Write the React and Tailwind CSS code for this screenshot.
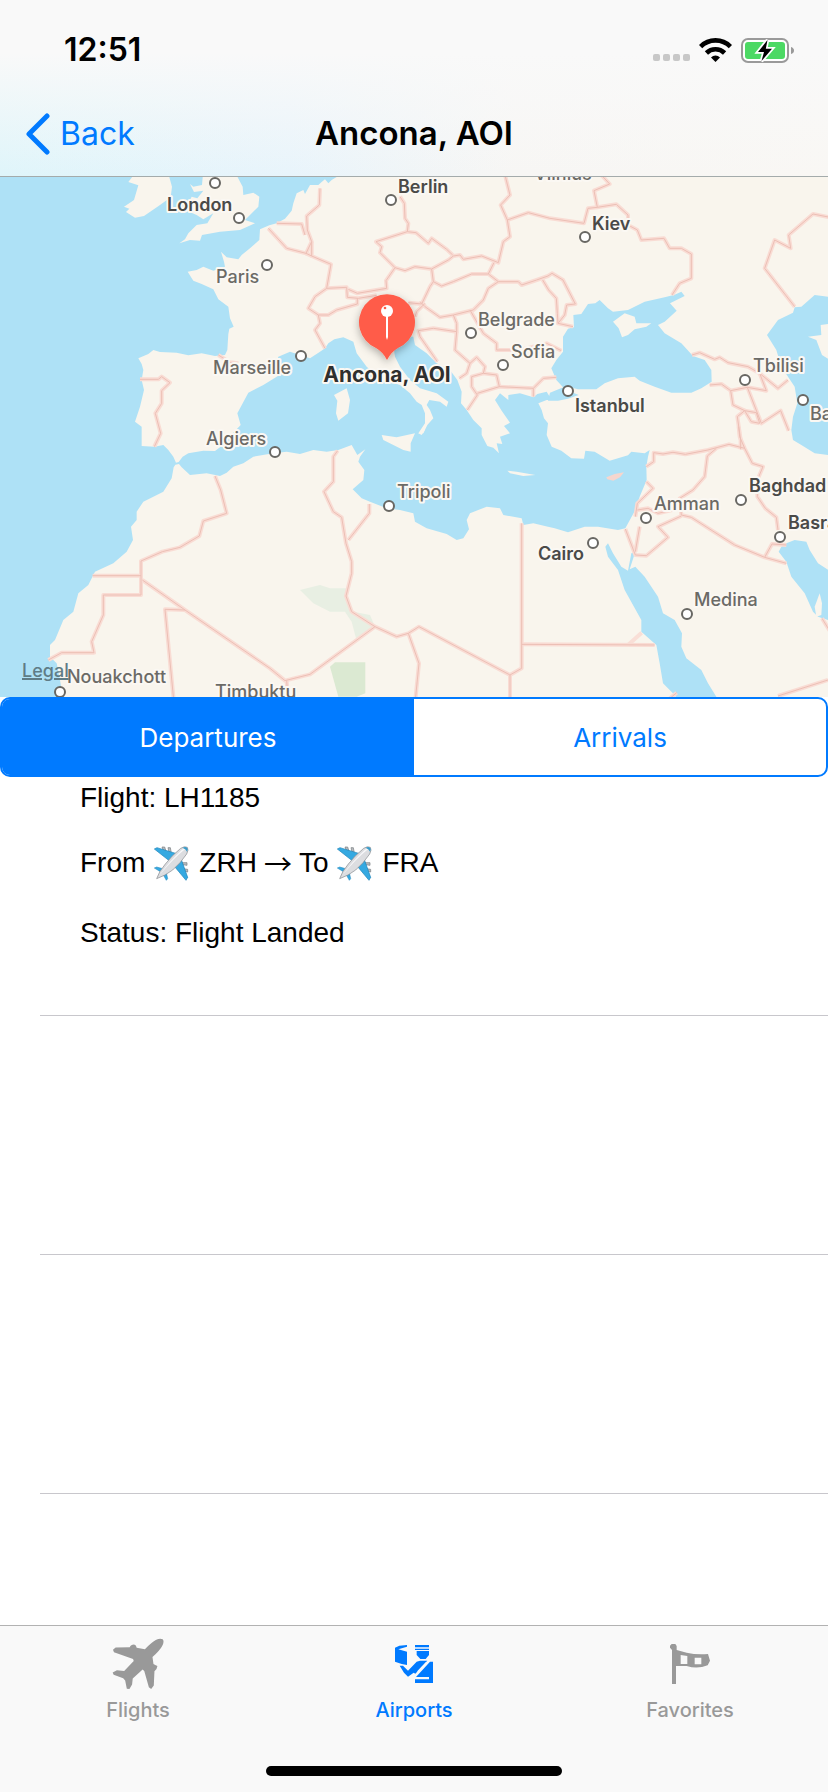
import React, { useState } from "react";

const MAINLAND =
  "1010,0 1010,21 995,30 985,40 975,28 965,36 955,45 930,45 915,72 910,60 890,70 880,100 875,122 855,146 830,160 808,166 780,178 778,210 750,235 725,255 715,268 680,262 663,245 672,275 675,290 640,302 610,290 590,300 563,305 580,332 605,342 640,358 655,388 685,410 690,445 701,470 688,476 685,492 682,540 675,555 645,558 605,550 565,556 530,548 480,546 460,540 445,552 415,565 425,582 430,600 425,630 432,660 420,710 405,755 425,770 425,828 463,830 490,825 505,840 520,860 528,878 536,876 548,860 565,850 610,842 645,843 660,832 680,805 700,788 722,765 712,730 745,668 790,645 835,617 850,600 828,580 835,560 870,545 900,555 930,565 960,545 975,535 985,520 1003,508 1030,502 1060,515 1070,550 1100,590 1140,625 1200,645 1230,670 1250,695 1265,705 1275,730 1275,760 1255,790 1270,790 1282,765 1300,745 1290,720 1280,705 1288,690 1320,695 1340,710 1345,695 1310,670 1260,655 1230,630 1200,590 1185,560 1182,540 1195,520 1225,498 1240,500 1245,525 1280,550 1310,580 1350,600 1372,630 1385,665 1383,700 1400,720 1420,750 1445,775 1445,795 1462,828 1480,833 1497,850 1490,820 1507,822 1500,800 1530,790 1512,768 1530,758 1505,722 1485,690 1500,670 1525,690 1525,675 1560,670 1600,682 1612,672 1640,665 1655,690 1640,690 1615,700 1625,720 1632,745 1644,760 1640,795 1655,830 1684,842 1714,865 1752,866 1756,842 1784,845 1829,872 1884,856 1894,845 1934,850 1949,840 1944,860 1939,890 1940,930 1919,980 1906,1020 1876,1075 1854,1080 1794,1070 1754,1070 1704,1087 1664,1075 1644,1070 1600,1060 1570,1065 1565,1045 1510,1035 1500,1015 1460,1010 1410,1030 1400,1050 1407,1078 1390,1105 1370,1110 1340,1092 1280,1075 1245,1055 1240,1030 1200,1020 1160,1015 1110,995 1085,985 1058,958 1090,930 1093,900 1075,875 1080,860 1096,838 1072,855 1055,825 1015,840 980,845 940,840 900,852 860,845 820,850 760,860 730,880 700,890 680,908 660,918 620,910 570,915 545,892 537,882 526,884 521,892 515,925 490,965 430,995 410,1025 410,1050 393,1070 399,1110 380,1145 340,1180 285,1205 265,1245 235,1270 220,1325 190,1350 165,1410 150,1425 150,1460 170,1480 180,1530 195,1620 2500,1620 2500,0";

const ISLANDS = [
  "610,0 606,45 580,50 570,42 582,66 610,62 592,85 575,80 555,120 590,135 610,148 640,130 622,160 590,165 565,190 555,208 538,220 570,210 600,212 606,195 660,185 720,180 765,160 735,150 775,110 778,80 760,68 730,75 728,50 712,20 700,0",
  "390,0 396,22 385,36 415,46 402,90 372,110 388,116 378,126 405,143 432,138 480,105 512,82 516,50 508,22 510,0",
  "1002,675 1040,655 1050,690 1044,730 1015,752 1008,730 1012,692",
  "1145,795 1190,802 1245,790 1232,820 1232,845 1210,840 1150,810",
  "1522,902 1550,905 1606,915 1570,918 1530,910",
  "1255,790 1275,780 1265,795",
];

const SEAS = [
  "1720,435 1744,432 1764,402 1786,400 1799,390 1824,415 1839,425 1884,420 1934,395 1994,382 2024,374 2044,365 2054,378 2010,400 2030,422 1994,455 1974,465 1994,490 2044,520 2079,558 2114,570 2134,600 2135,635 2104,655 2074,668 2014,668 1964,650 1919,632 1904,620 1854,625 1814,640 1789,658 1734,658 1710,652 1692,655 1669,630 1654,595 1669,570 1689,545 1689,500 1704,476 1722,472",
  "1650,668 1690,652 1720,668 1736,675 1704,686 1674,692 1644,692",
  "2384,412 2404,410 2444,375 2500,382 2500,857 2484,855 2444,850 2404,825 2379,810 2374,780 2379,740 2392,700 2384,650 2344,590 2329,540 2301,495 2334,450 2379,428",
  "1824,1120 1816,1130 1824,1160 1854,1200 1874,1260 1924,1350 1924,1385 1969,1425 1979,1480 1989,1540 2024,1575 2040,1600 2160,1600 2149,1580 2124,1540 2104,1500 2059,1465 2044,1430 2046,1390 2024,1350 1989,1330 1974,1280 1934,1220 1906,1190 1889,1198 1906,1145 1894,1150 1884,1202 1864,1190 1839,1150",
  "2344,1130 2359,1120 2384,1110 2419,1115 2429,1140 2454,1180 2500,1210 2500,1355 2454,1340 2439,1325 2414,1270 2374,1220 2359,1175 2336,1145",
];

const INNER_LAND = [
  "1839,455 1874,430 1904,440 1909,460 1954,460 1939,470 1904,478 1884,495 1866,502 1856,475",
  "2500,460 2462,465 2464,495 2424,500 2449,510 2466,555 2500,576",
  "2459,1270 2466,1300 2464,1335 2449,1340 2444,1310",
];

const PARKS = [
  ["900,1260 960,1245 990,1255 1040,1255 1036,1280 1060,1325 1110,1335 1125,1370 1068,1405 1055,1355 1035,1325 990,1325 940,1300", "#e8efe3"],
  ["990,1490 1005,1477 1096,1477 1096,1570 1070,1580 1015,1580", "#dbe9d2"],
];

const BORDERS = [
  "1200,80 1213,100 1215,145 1225,160 1222,185 1248,188 1285,220 1295,205 1340,238 1358,255",
  "1222,185 1128,215 1145,230 1140,248 1185,293 1215,302 1245,290 1295,297 1345,270 1360,258 1380,255 1390,268 1445,258 1495,278 1510,215 1530,200 1522,150 1502,105 1530,75 1515,15",
  "1522,150 1585,128 1650,145 1752,160 1764,115 1792,112 1782,62 1829,42 1804,15",
  "1792,112 1849,103 1884,135 1884,165 1912,180 1924,210 1992,205 2009,235 2044,235 2074,252 2074,325 2039,340 2016,375",
  "1185,293 1158,332 1160,355 1072,370 1045,358",
  "960,55 958,105 920,138 922,180 935,215 918,250 860,235 805,175",
  "830,160 905,162 915,195",
  "935,215 935,258 993,283 980,355 1040,352 1042,382 1075,385 1130,376",
  "918,250 935,258",
  "980,355 945,380 925,415 955,435 985,435 1010,420 1072,402 1072,385",
  "955,435 960,460 945,480 975,535",
  "1225,398 1265,402 1290,350 1300,335 1295,297",
  "1300,335 1325,348 1360,335 1415,312 1465,312 1495,335 1555,335 1565,345 1610,330 1644,318 1656,310 1689,330 1726,402 1700,405 1694,435 1674,460 1719,470",
  "1465,312 1482,278",
  "1495,335 1465,355 1450,390 1420,420 1360,435 1320,442 1275,410 1260,395",
  "1275,400 1250,425 1245,440",
  "1360,435 1370,460 1370,485 1300,475 1255,482 1260,500 1312,575",
  "1370,485 1365,540 1410,580 1400,610 1378,625",
  "1410,420 1450,490 1490,520 1490,540 1560,540 1640,520 1684,542",
  "1410,580 1430,562 1455,590 1450,610 1415,620 1415,650 1432,675 1402,720",
  "1450,610 1490,615 1498,650 1432,670",
  "1498,650 1600,655 1630,625 1669,622",
  "1600,655 1600,680",
  "1628,330 1646,360 1669,385 1672,430 1674,460",
  "2076,555 2099,548 2144,568 2159,562 2184,578 2244,590 2279,610 2334,655 2364,630",
  "2129,645 2164,642 2192,662 2199,705 2234,722 2269,728 2279,760",
  "2192,662 2242,652 2299,662 2279,610",
  "2242,652 2284,760 2342,722 2366,782",
  "2279,760 2254,755 2234,722 2212,740 2222,810 2222,838",
  "2216,770 2219,800 2234,835 2257,880 2289,890 2272,930 2272,980 2296,1015 2329,1042 2334,1080",
  "2500,144 2439,132 2366,195 2372,235 2324,210 2294,295 2384,410",
  "1939,890 1961,875 1961,848 1989,852 2019,847 2056,853 2124,840 2187,823 2234,835",
  "2149,835 2122,858 2114,920 2079,960 2039,985 2044,1035 2074,1042 2204,1125 2294,1162 2359,1180",
  "2294,1162 2316,1122 2359,1125",
  "2044,1038 1974,1070 2004,1102 1939,1157 1906,1155 1876,1077",
  "1906,1145 1919,1070",
  "1939,935 1959,955 1912,1000 1906,1040",
  "1912,1020 1944,1015 1974,1030 2039,1015",
  "1565,1060 1565,1495 1530,1515 1530,1600",
  "1565,1423 1964,1425",
  "1530,1515 1257,1370 1225,1390 1190,1400 1125,1370 1055,1325 1038,1278 1055,1210 1055,1175 1038,1120 1025,1042 1000,1025 972,965 1000,935 1000,860 1013,842",
  "1045,1110 1108,1030 1108,1002",
  "1225,1390 1257,1480 1245,1600",
  "1125,1370 930,1513 855,1532 810,1495 555,1320 427,1230",
  "860,1532 865,1600",
  "555,1320 495,1318 522,1600",
  "645,918 662,960 680,1030 610,1053 598,1098 540,1132 487,1145 423,1173 423,1275 310,1275 310,1335 275,1415 282,1448 185,1448 145,1470",
  "423,1217 278,1217",
  "420,628 475,628 485,620 510,638 485,662 485,700 466,730 482,790 463,830",
  "655,555 690,577 715,580",
  "2334,1578 2484,1530",
  "2010,1585 2030,1568",
  "2466,1345 2500,1400",
];

const DOTS = [
  [215, 6], [239, 41], [267, 88], [391, 23], [301, 179], [471, 156], [503, 188], [585, 60],
  [568, 214], [745, 203], [803, 223], [275, 275], [389, 329], [593, 366], [646, 341],
  [741, 323], [780, 360], [687, 437], [60, 515],
];

const STRONG = { weight: 600, fill: "#4a4a48" };
const LIGHT = { weight: 500, fill: "#6b6a66" };

const CITIES = [
  ["London", 167, 34, STRONG],
  ["Paris", 216, 106, LIGHT],
  ["Marseille", 213, 197, LIGHT],
  ["Berlin", 398, 16, STRONG],
  ["Vilnius", 534, 3, LIGHT],
  ["Kiev", 592, 53, STRONG],
  ["Belgrade", 478, 149, LIGHT],
  ["Sofia", 511, 181, LIGHT],
  ["Istanbul", 575, 235, STRONG],
  ["Tbilisi", 753, 195, LIGHT],
  ["Baku", 810, 243, LIGHT],
  ["Algiers", 206, 268, LIGHT],
  ["Tripoli", 397, 321, LIGHT],
  ["Cairo", 538, 383, STRONG],
  ["Amman", 654, 333, LIGHT],
  ["Baghdad", 749, 315, STRONG],
  ["Basra", 788, 352, STRONG],
  ["Medina", 694, 429, LIGHT],
  ["Nouakchott", 67, 506, LIGHT],
  ["Timbuktu", 215, 521, LIGHT],
];

function AirportMap() {
  return (
    <section aria-label="Map" className="relative">
      <svg viewBox="0 0 828 520" className="block w-full bg-[#aee1f6] font-[Inter,sans-serif]">
        <defs>
          <filter id="pin-shadow" x="-30%" y="-30%" width="160%" height="160%">
            <feDropShadow dx="0" dy="3" stdDeviation="4" floodOpacity="0.3" />
          </filter>
        </defs>
        <g transform="translate(0 -7) scale(0.333333)">
          <polygon points={MAINLAND} fill="#f9f5ed" />
          {ISLANDS.map((p) => <polygon key={p} points={p} fill="#f9f5ed" />)}
          {PARKS.map(([p, fill]) => <polygon key={p} points={p} fill={fill} />)}
          {SEAS.map((p) => <polygon key={p} points={p} fill="#aee1f6" />)}
          {INNER_LAND.map((p) => <polygon key={p} points={p} fill="#f9f5ed" />)}
          <polygon points="1819,922 1844,912 1872,907 1860,922 1840,932 1822,928" fill="#f6d6ce" />
          <polyline points="1884,1425 1925,1388" fill="none" stroke="#f9dfd7" strokeWidth="12" />
          <g fill="none" stroke="#f9dcd4" strokeWidth="12" strokeLinejoin="round">
            {BORDERS.map((p) => <polyline key={p} points={p} />)}
          </g>
          <g fill="none" stroke="#ecbfb5" strokeWidth="3" strokeLinejoin="round">
            {BORDERS.map((p) => <polyline key={p} points={p} />)}
          </g>
        </g>
        {DOTS.map(([x, y]) => (
          <circle key={`${x}-${y}`} cx={x} cy={y} r="5" fill="#fff" stroke="#686763" strokeWidth="2" />
        ))}
        <g fontSize="18" stroke="#fbf8f3" strokeWidth="4" strokeLinejoin="round" paintOrder="stroke">
          {CITIES.map(([name, x, y, tone]) => (
            <text key={name} x={x} y={y} fontWeight={tone.weight} fill={tone.fill}>{name}</text>
          ))}
        </g>
        <path
          d="M387 183 Q383 175 376 171 A28 28 0 1 1 398 171 Q391 175 387 183 Z"
          fill="#ff5b48"
          filter="url(#pin-shadow)"
        />
        <path d="M386 139 H388 V160 L387 163 L386 160 Z" fill="#fff" />
        <circle cx="387" cy="134" r="6" fill="#fff" />
        <circle cx="385" cy="131" r="1.3" fill="#ff5b48" />
        <text x="387" y="205" textAnchor="middle" fontSize="21" fontWeight="700" fill="#2f2f2e" stroke="#fbf8f3" strokeWidth="4" strokeLinejoin="round" paintOrder="stroke">
          Ancona, AOI
        </text>
      </svg>
      <a href="#legal" className="absolute bottom-4 left-[22px] font-[Inter,sans-serif] text-[18px] leading-5 font-medium text-[#5f7c86] underline decoration-2">
        Legal
      </a>
    </section>
  );
}

function StatusIcons() {
  return (
    <div className="flex items-center gap-[9px]">
      <svg viewBox="0 0 37 25" className="h-[25px] w-[37px]" fill="#c8c8c8">
        <rect x="0" y="16" width="7" height="7" rx="2" />
        <rect x="10" y="16" width="7" height="7" rx="2" />
        <rect x="20" y="16" width="7" height="7" rx="2" />
        <rect x="30" y="16" width="7" height="7" rx="2" />
      </svg>
      <svg viewBox="0 0 33 25" className="h-[25px] w-[33px]">
        <g fill="none" stroke="#000" strokeWidth="4.6">
          <path d="M1.6 8.600 A21 21 0 0 1 31.4 8.600" />
          <path d="M7.4 15 A13 13 0 0 1 25.6 15" />
        </g>
        <path d="M16.5 24 L12 19.4 A6.4 6.4 0 0 1 21 19.4 Z" />
      </svg>
      <svg viewBox="0 0 53 25" className="h-[25px] w-[53px]">
        <rect x="1" y="1" width="46" height="23" rx="6" fill="#fff" stroke="#9a9a9a" strokeWidth="2" />
        <rect x="4" y="4" width="40" height="17" rx="3" fill="#4cd964" />
        <path d="M50 9 Q53 10 53 12.5 Q53 15 50 16 Z" fill="#9a9a9a" />
        <path d="M26.500 2 L17 14 H23 L20.500 23 L31 10.700 H24.800 Z" fill="#000" stroke="#fff" strokeWidth="3.500" paintOrder="stroke" />
      </svg>
    </div>
  );
}

function PlaneEmoji() {
  return (
    <svg viewBox="0 0 105 105" role="img" aria-label="Airplane" className="mr-[10px] ml-[9px] h-[35px] w-[35px]">
      <g fill="#b9bcc0" stroke="#777b80" strokeWidth="2">
        <path d="M24 3 L32 3 L36 16 L28 14 Z" />
        <path d="M42 5 L49 5 L52 21 L45 19 Z" />
        <path d="M101 70 L101 78 L88 74 L88 68 Z" />
        <path d="M99 50 L99 58 L85 56 L84 50 Z" />
      </g>
      <path d="M1 9 L9 5 L68 23 L48 46 Z" fill="#35a9e1" stroke="#1d83b8" strokeWidth="2" />
      <path d="M57 56 L80 35 L101 94 L96 103 Z" fill="#35a9e1" stroke="#1d83b8" strokeWidth="2" />
      <path d="M1 66 L8 63 L30 69 L22 79 Z" fill="#35a9e1" stroke="#1d83b8" strokeWidth="1.500" />
      <path d="M26 83 L36 75 L41 98 L37 103 Z" fill="#35a9e1" stroke="#1d83b8" strokeWidth="1.500" />
      <path d="M8 98 Q14 78 34 54 Q54 28 80 7 Q92 -1 100 4 Q105 11 98 24 Q80 51 56 72 Q34 89 8 98 Z" fill="#dcdde0" stroke="#85888d" strokeWidth="2" />
      <path d="M16 88 Q40 52 84 11 Q90 7 94 9 Q60 35 16 88 Z" fill="#f8f8fa" />
      <path d="M86 5 Q95 1 100 6 Q103 10 99 17 Q96 9 86 5 Z" fill="#3b9cca" />
    </svg>
  );
}

function FlightsIcon() {
  return (
    <svg viewBox="92 82 158 156" className="h-[52px] w-[52px]" fill="currentColor">
      <path d="M246 85 Q252 92 244 106 Q238 118 215 139 L218 160 Q223 163 230 166 Q229 176 221 182 L219 225 L211 236 L204 231 L190 181 L185 177 L155 204 L153 222 L145 236 L137 235 L132 210 L126 203 L97 193 L94 186 L107 179 L129 181 L158 151 L156 145 L98 124 L95 117 L103 110 L146 109 Q149 101 159 101 Q166 102 167 111 L192 115 Q212 94 225 87 Q238 81 246 85 Z" />
    </svg>
  );
}

function AirportsIcon() {
  return (
    <svg viewBox="945 108 114 114" className="h-[38px] w-[38px]" fill="currentColor">
      <path d="M945 116 L958 110 L981 108 V113 L955 121 L981 128 V168 L965 165 L945 158 Z" />
      <path d="M1005 108 H1047 V115 H1005 Z M1005 119 H1047 V123 H1005 Z" />
      <path d="M1010 126 H1047 V138 L1037 150 H1021 L1010 138 Z" />
      <path d="M959 170 H969 L984 185 L1010 158 L1020 155 H1042 L1006 194 L1001 191 L984 203 L972 191 Z" />
      <path d="M1050 158 H1059 V222 H1005 V211 H1047 V204 H1008 Z" />
      <path d="M1013 188 L1040 160" stroke="#f9f9f9" strokeWidth="4" />
    </svg>
  );
}

function FavoritesIcon() {
  return (
    <svg viewBox="690 102 120 120" className="h-10 w-10" fill="currentColor">
      <path fillRule="evenodd" d="M695 102 H706 L710 108 V120 L740 128 Q770 135 804 132 L810 152 L803 166 Q772 178 740 168 H708 V222 H696 V120 L690 113 V107 Z M722 135 V162 H742 V138 Z M764 143 V163 H784 V143 Z" />
    </svg>
  );
}

const TABS = [
  { name: "Flights", Icon: FlightsIcon },
  { name: "Airports", Icon: AirportsIcon },
  { name: "Favorites", Icon: FavoritesIcon },
];

export default function App() {
  const [board, setBoard] = useState("Departures");
  const [tab, setTab] = useState("Airports");

  return (
    <div className="flex min-h-screen flex-col bg-white font-[Inter,sans-serif] text-black">
      <header className="flex flex-col border-b border-[#a4abab] bg-[linear-gradient(to_top,#f9f9f900,#f9f9f9_70%),linear-gradient(to_right,#dff5fa,#e8f4fb_35%,#f7f6f4_62%,#f9f7f4)]">
        <div className="flex h-[100px] items-center justify-between pr-[34px] pl-16">
          <time className="text-[32px] font-semibold">12:51</time>
          <StatusIcons />
        </div>
        <div className="grid h-[76px] grid-cols-[1fr_auto_1fr] items-center px-[25px] pb-2">
          <button type="button" className="flex items-center gap-[10px] justify-self-start text-[32px] text-[#007aff]">
            <svg viewBox="0 0 25 42" className="h-[42px] w-[25px]" fill="none" stroke="currentColor" strokeWidth="5" strokeLinecap="round" strokeLinejoin="round">
              <path d="M22 3 L4 21 L22 39" />
            </svg>
            Back
          </button>
          <h1 className="text-[33px] font-semibold">Ancona, AOI</h1>
        </div>
      </header>

      <main className="flex grow flex-col">
        <AirportMap />
        <div role="group" aria-label="Flight board" className="grid h-20 grid-cols-2 overflow-hidden rounded-[10px] border-2 border-[#007aff] bg-white">
          {["Departures", "Arrivals"].map((name) => (
            <button
              key={name}
              type="button"
              aria-pressed={board === name}
              onClick={() => setBoard(name)}
              className={board === name ? "bg-[#007aff] text-[26px] text-white" : "text-[26px] text-[#007aff]"}
            >
              {name}
            </button>
          ))}
        </div>
        <ul className="pl-10 font-['Liberation_Sans',sans-serif] text-[28px] leading-8">
          <li className="flex h-[239px] flex-col border-b border-[#c8c7cc] pt-[5px] pl-10">
            <p>Flight: LH1185</p>
            <p className="mt-[31px] flex h-9 items-center">
              From <PlaneEmoji /> ZRH
              <span className="mx-[7px] font-['Noto_Sans_CJK_JP',sans-serif]">→</span>
              To <PlaneEmoji /> FRA
            </p>
            <p className="mt-9">Status: Flight Landed</p>
          </li>
          <li className="h-[239px] border-b border-[#c8c7cc]" />
          <li className="h-[239px] border-b border-[#c8c7cc]" />
        </ul>
      </main>

      <footer className="border-t border-[#b2b2b2] bg-[#f9f9f9]">
        <nav aria-label="Main" className="grid grid-cols-3">
          {TABS.map(({ name, Icon }) => (
            <button
              key={name}
              type="button"
              aria-current={tab === name ? "page" : undefined}
              onClick={() => setTab(name)}
              className={
                tab === name
                  ? "flex flex-col items-center pt-2 text-[20px] leading-6 font-medium text-[#007aff]"
                  : "flex flex-col items-center pt-2 text-[20px] leading-6 font-medium text-[#999999]"
              }
            >
              <span className="flex h-15 items-center">
                <Icon />
              </span>
              <span className="mt-1">{name}</span>
            </button>
          ))}
        </nav>
        <div className="mx-auto mt-11 mb-4 h-[10px] w-[296px] rounded-full bg-black" />
      </footer>
    </div>
  );
}
